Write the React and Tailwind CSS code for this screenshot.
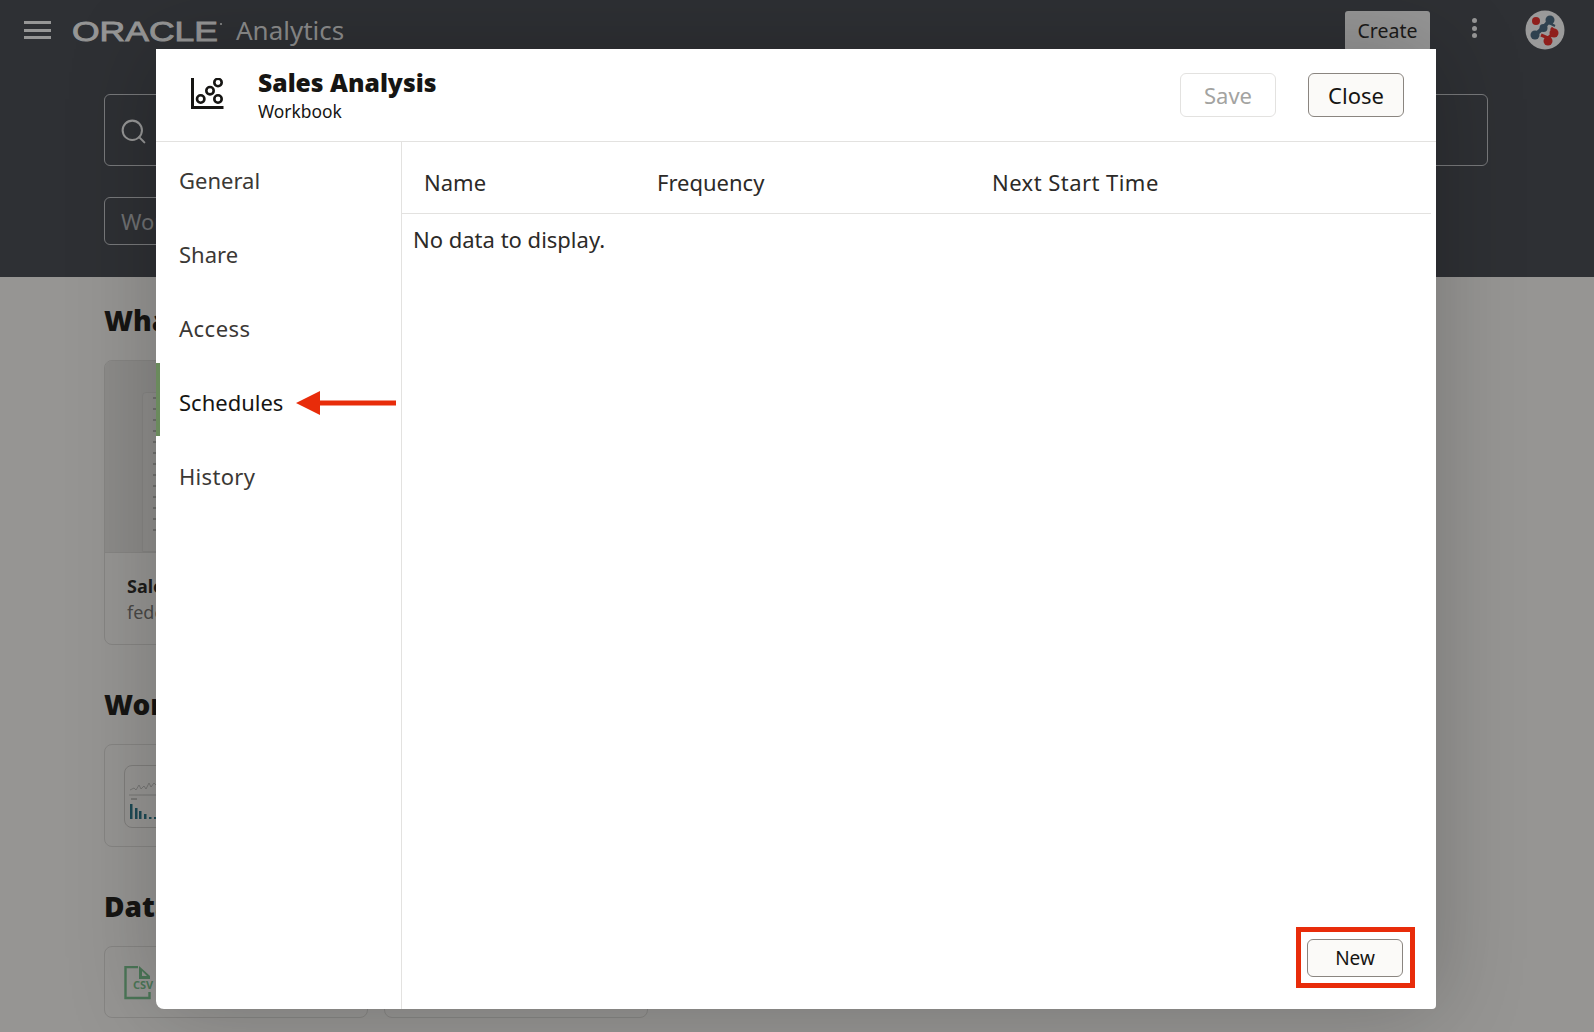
import { Search } from "lucide-react";

const navItems = [
  { label: "General", className: "" },
  { label: "Share", className: "" },
  { label: "Access", className: "tracking-[0.5px]" },
  { label: "Schedules", className: "" },
  { label: "History", className: "tracking-[0.3px]" },
];

function AvatarIcon() {
  return (
    <svg width="40" height="40" viewBox="0 0 40 40" fill="none">
      <circle cx="20" cy="20" r="19.5" fill="#9a9a9a" />
      <circle cx="11" cy="11" r="4" fill="#8f1f1c" />
      <circle cx="25" cy="10" r="4.5" fill="#2f4250" />
      <circle cx="18.5" cy="18" r="4" fill="#2f4250" />
      <circle cx="10" cy="25" r="4.5" fill="#2f4250" />
      <path d="M25 10L18 18L10 25" stroke="#2f4250" strokeWidth="4" />
      <path d="M24 13l6 3" stroke="#2f4250" strokeWidth="2" />
      <circle cx="29" cy="23" r="4.5" fill="#8f1f1c" />
      <circle cx="23" cy="31" r="4.5" fill="#8f1f1c" />
      <path d="M16 25l7 3 6-5M26 18l5 4" stroke="#8f1f1c" strokeWidth="3" />
    </svg>
  );
}

function ChartIcon() {
  return (
    <svg width="34" height="34" viewBox="0 0 34 34" fill="none" stroke="#161513">
      <path d="M2.5 0v29.5h31" strokeWidth="3" />
      <circle cx="10.7" cy="21" r="3.7" strokeWidth="2.6" />
      <circle cx="20" cy="12.7" r="3.7" strokeWidth="2.6" />
      <circle cx="28" cy="4.5" r="3.7" strokeWidth="2.6" />
      <circle cx="28" cy="21" r="3.7" strokeWidth="2.6" />
    </svg>
  );
}

function CsvIcon() {
  return (
    <svg width="34" height="34" viewBox="0 0 34 34" fill="none">
      <path d="M14 1H1.5v31h24V26" stroke="#4b7657" strokeWidth="2.4" />
      <path d="M15 0l11 10v3H15z" fill="#4b7657" />
      <path d="M18 5v5h5z" fill="#969593" />
      <text x="9" y="23" fontSize="11" fontWeight="700" fontFamily="Noto Sans, sans-serif" fill="#4b7657">
        CSV
      </text>
    </svg>
  );
}

function MiniChart() {
  return (
    <svg width="44" height="62" viewBox="0 0 44 62" fill="none">
      <path d="M5 24l4-2 2 2 3-5 2 4 3-3 2 3 3-6 2 4 3-4 3 3 3-2 3 2" stroke="#6f6f6d" strokeWidth="0.8" />
      <path d="M4 29h40" stroke="#6f6f6d" strokeWidth="0.8" />
      <path d="M6 33h6" stroke="#5c5c5a" strokeWidth="1" />
      <rect x="5" y="38" width="2.5" height="15" fill="#1d4a55" />
      <rect x="10" y="42" width="2.5" height="11" fill="#1d4a55" />
      <rect x="14" y="45" width="2.5" height="8" fill="#1d4a55" />
      <rect x="19" y="48" width="2.5" height="5" fill="#1d4a55" />
      <rect x="24" y="51" width="2.5" height="2" fill="#1d4a55" />
      <rect x="29" y="51" width="2.5" height="2" fill="#1d4a55" />
    </svg>
  );
}

function ReportThumb() {
  return (
    <div className="ml-[37px] mt-[31px] w-[60px] h-[160px] rounded-t border border-[#868583] bg-[#8f8e8c] flex flex-col gap-[9px] pl-1 pt-1 overflow-hidden">
      {[0, 1, 2, 3, 4, 5, 6, 7, 8, 9, 10, 11, 12].map((i) => (
        <div key={i} className="ml-[6px] w-[5px] h-[2px] bg-[#70706e]" />
      ))}
    </div>
  );
}

function Page() {
  return (
    <div className="w-[1594px] h-[1032px] overflow-hidden bg-[#969593]">
      <div className="h-[277px] bg-[#2e3034]">
        <div className="h-[59px] flex items-start">
          <div className="ml-6 mt-[21px] w-[27px] h-[18px] flex flex-col justify-between">
            <div className="h-[3px] bg-[#969696]" />
            <div className="h-[3px] bg-[#969696]" />
            <div className="h-[3px] bg-[#969696]" />
          </div>
          <svg className="ml-[21px] mt-[18px]" width="152" height="28" viewBox="0 0 152 28">
            <text
              x="0"
              y="23"
              textLength="146"
              lengthAdjust="spacingAndGlyphs"
              fontSize="27"
              fontFamily="Liberation Sans, sans-serif"
              fill="#969696"
              stroke="#969696"
              strokeWidth="0.9"
            >
              ORACLE
            </text>
            <circle cx="149" cy="6" r="1" fill="#969696" />
          </svg>
          <span className="ml-[12px] mt-[11px] text-[26px] leading-[38px] text-[#8d8d8d]">Analytics</span>
          <button className="ml-auto mt-[11px] w-[85px] h-[40px] rounded-[3px] bg-[#969696] text-[19.5px] text-[#1b1a19]">
            Create
          </button>
          <div className="ml-[42px] mt-[18px] w-[5px] h-[20px] flex flex-col justify-between">
            <div className="w-[5px] h-[5px] rounded-full bg-[#969696]" />
            <div className="w-[5px] h-[5px] rounded-full bg-[#969696]" />
            <div className="w-[5px] h-[5px] rounded-full bg-[#969696]" />
          </div>
          <div className="ml-[48px] mr-[29px] mt-[10px]">
            <AvatarIcon />
          </div>
        </div>
        <div className="ml-[104px] mr-[106px] mt-[35px] h-[72px] rounded-md border border-[#77787a] flex items-center pl-[14px] pt-[3px]">
          <Search size={29} color="#969696" strokeWidth={1.7} />
        </div>
        <div className="ml-[104px] mt-[31px] w-[160px] h-[48px] rounded-md border border-[#77787a] flex items-center pl-[16px] text-[22px] text-[#6f7072]">
          Workbooks
        </div>
      </div>

      <div className="pl-[104px]">
        <h2 className="mt-[22px] h-[42px] text-[28px] leading-[42px] font-black text-[#161513]">What's New</h2>
        <div className="mt-[19px] w-[264px] h-[285px] rounded-lg border border-[#868583] flex flex-col overflow-hidden">
          <div className="h-[192px] bg-[#8c8b89] border-b border-[#868583] overflow-hidden">
            <ReportThumb />
          </div>
          <div className="pl-[22px] pt-[20px]">
            <div className="text-[18px] leading-[26px] font-bold text-[#1d1c1b]">Sales Analysis</div>
            <div className="text-[18px] leading-[27px] text-[#4a4947]">federer</div>
          </div>
        </div>
        <h2 className="mt-[38px] h-[42px] text-[28px] leading-[42px] font-black text-[#161513]">Workbooks</h2>
        <div className="mt-[19px] w-[264px] h-[103px] rounded-lg border border-[#868583] pl-[19px] pt-[20px]">
          <div className="w-[80px] h-[63px] rounded-lg border border-[#7f7e7c]">
            <MiniChart />
          </div>
        </div>
        <h2 className="mt-[38px] h-[42px] text-[28px] leading-[42px] font-black text-[#161513]">Data</h2>
        <div className="mt-[19px] flex gap-[16px]">
          <div className="w-[264px] h-[72px] rounded-lg border border-[#868583] pl-[19px] pt-[19px]">
            <CsvIcon />
          </div>
          <div className="w-[264px] h-[72px] rounded-lg border border-[#868583]" />
        </div>
      </div>
    </div>
  );
}

function Modal() {
  return (
    <div className="absolute left-[156px] top-[49px] w-[1280px] h-[960px] bg-white rounded-bl-lg rounded-br-sm flex flex-col shadow-[0_0_90px_rgba(0,0,0,0.22)]">
      <div className="h-[93px] shrink-0 border-b border-[#e3e2e0] flex items-start">
        <div className="ml-[34px] mt-[29px]">
          <ChartIcon />
        </div>
        <div className="ml-[34px] mt-[16px]">
          <div className="text-[24.7px] leading-[36px] font-black text-[#161513]">Sales Analysis</div>
          <div className="-mt-[2px] text-[17.4px] leading-[24px] text-[#161513]">Workbook</div>
        </div>
        <button className="ml-auto mt-[24px] w-[96px] h-[44px] rounded-md border border-[#e3e2e0] bg-white text-[22px] text-[#a3a3a1]">
          Save
        </button>
        <button className="ml-[32px] mr-[32px] mt-[24px] w-[96px] h-[44px] rounded-md border border-[#8a8580] bg-[#fbfaf8] text-[22px] text-[#161513]">
          Close
        </button>
      </div>
      <div className="flex-1 flex min-h-0">
        <div className="w-[246px] shrink-0 border-r border-[#e3e2e0] pt-[1px]">
          {navItems.map((item) => {
            const active = item.label === "Schedules";
            return (
              <div
                key={item.label}
                className={`relative h-[74px] flex items-center pl-[23px] text-[22px] ${
                  active ? "text-[#161513]" : "text-[#3b3835]"
                }`}
              >
                {active && <div className="absolute left-0 -top-[2px] w-1 h-[73px] bg-[#6a8a5c]" />}
                <span className={item.className}>{item.label}</span>
                {active && (
                  <svg className="absolute left-[138px] top-[25px]" width="104" height="26" viewBox="0 0 104 26">
                    <path d="M2 13L26 1v9.5h76v5H26V25z" fill="#e82c0a" />
                  </svg>
                )}
              </div>
            );
          })}
        </div>
        <div className="flex-1 flex flex-col pr-[5px]">
          <div className="h-[72px] shrink-0 border-b border-[#e3e2e0] flex items-center pt-[10px] text-[22px] text-[#2c2a28]">
            <span className="ml-[22px] w-[233px]">Name</span>
            <span className="w-[335px]">Frequency</span>
            <span className="tracking-[0.45px]">Next Start Time</span>
          </div>
          <div className="pl-[11px] pt-[8px] text-[22px] leading-[34px] text-[#2c2a28]">No data to display.</div>
          <div className="mt-auto self-end mr-[16px] mb-[21px] border-[5px] border-[#e82c0a] pt-[7px] pb-[6px] pl-[6px] pr-[7px]">
            <button className="block w-[96px] h-[38px] rounded-md border border-[#8a8580] bg-[#fbfaf8] text-[19px] text-[#161513]">
              New
            </button>
          </div>
        </div>
      </div>
    </div>
  );
}

export default function App() {
  return (
    <div className="relative w-[1594px] h-[1032px] overflow-hidden font-['Noto_Sans',sans-serif]">
      <Page />
      <Modal />
    </div>
  );
}
